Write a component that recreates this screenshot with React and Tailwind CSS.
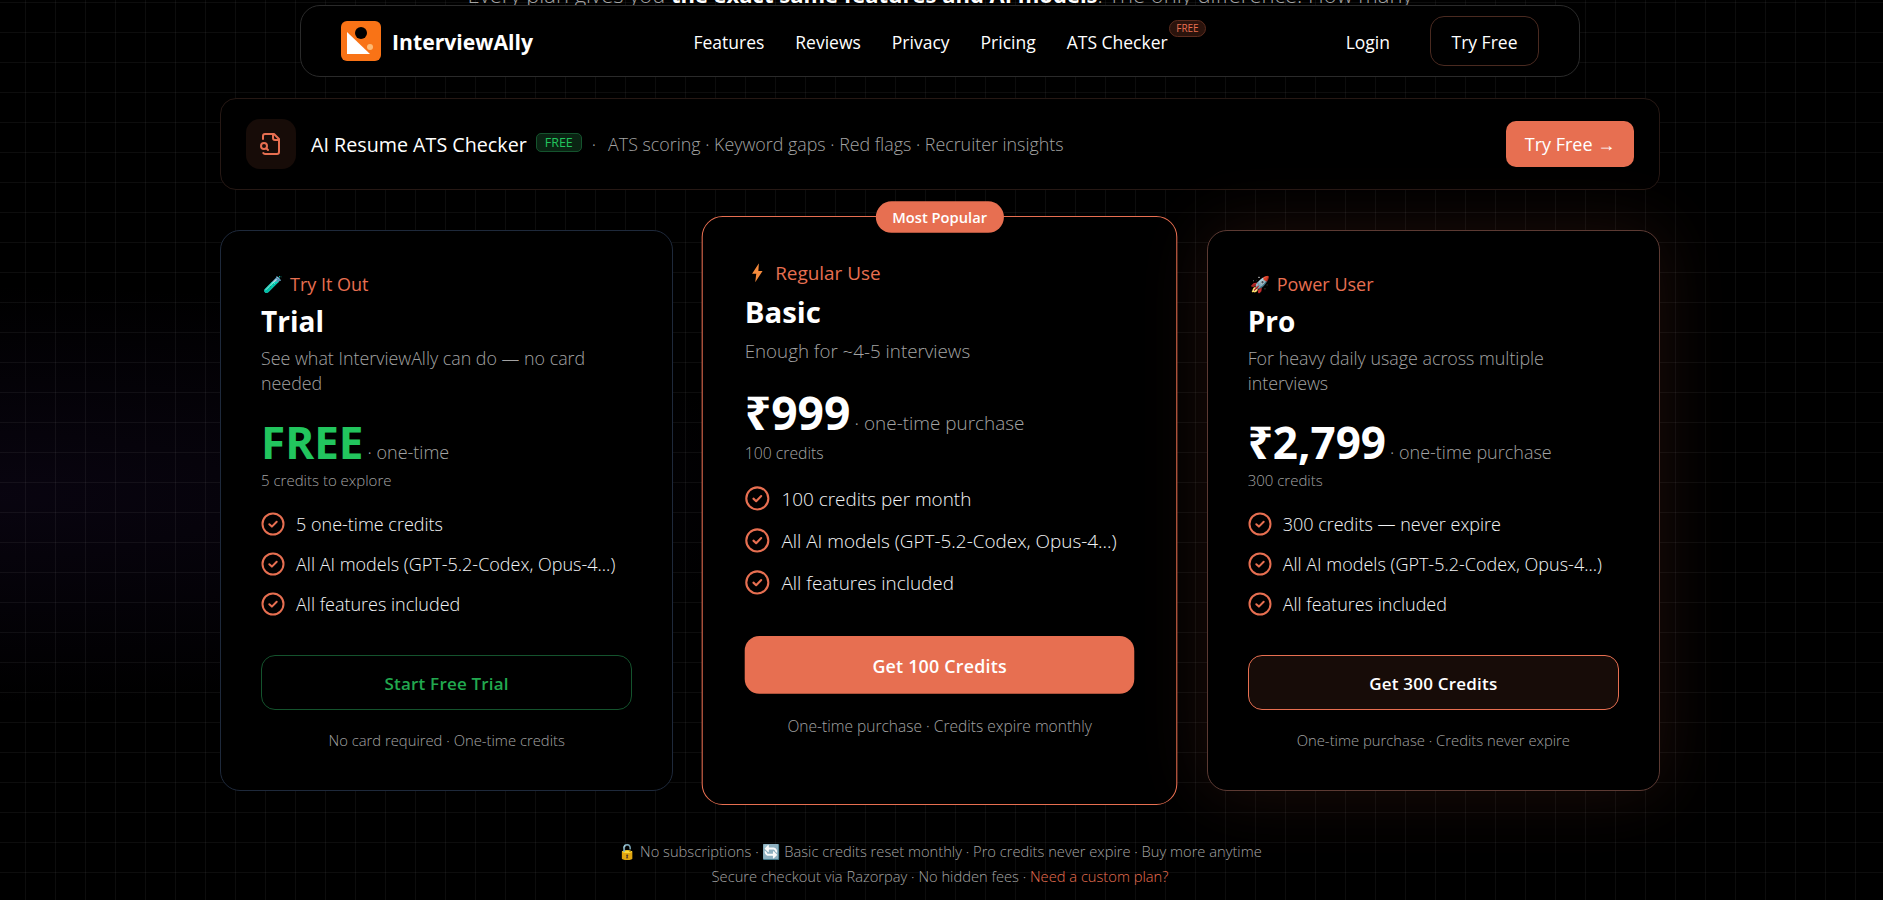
import React from 'react';

const FONT = "font-['Open_Sans','Noto_Sans',sans-serif]";

const PLANS = [
  {
    emoji: '🧪',
    tag: 'Try It Out',
    name: 'Trial',
    desc: 'See what InterviewAlly can do — no card needed',
    price: 'FREE',
    priceColor: 'text-[#22c55e]',
    per: 'one-time',
    credits: '5 credits to explore',
    features: ['5 one-time credits', 'All AI models (GPT-5.2-Codex, Opus-4...)', 'All features included'],
    cta: 'Start Free Trial',
    ctaClass: 'border border-[#14532d] text-[#22a84f]',
    note: 'No card required · One-time credits',
    cardClass: 'border-[#1e293b]',
  },
  {
    bolt: true,
    tag: 'Regular Use',
    name: 'Basic',
    desc: 'Enough for ~4-5 interviews',
    price: '₹999',
    priceColor: 'text-white',
    per: 'one-time purchase',
    credits: '100 credits',
    features: ['100 credits per month', 'All AI models (GPT-5.2-Codex, Opus-4...)', 'All features included'],
    cta: 'Get 100 Credits',
    ctaClass: 'bg-[#e76f51] text-white',
    note: 'One-time purchase · Credits expire monthly',
    cardClass: 'border-[#e76f51] scale-[1.05]',
    popular: true,
  },
  {
    emoji: '🚀',
    tag: 'Power User',
    name: 'Pro',
    desc: 'For heavy daily usage across multiple interviews',
    price: '₹2,799',
    priceColor: 'text-white',
    per: 'one-time purchase',
    credits: '300 credits',
    features: ['300 credits — never expire', 'All AI models (GPT-5.2-Codex, Opus-4...)', 'All features included'],
    cta: 'Get 300 Credits',
    ctaClass: 'border border-[#e76f51] bg-[#170c08] text-white',
    note: 'One-time purchase · Credits never expire',
    cardClass: 'border-[#5c3a33] shadow-[0_0_70px_rgba(231,111,81,0.13)]',
  },
];

function Logo() {
  return (
    <svg width="40" height="40" viewBox="0 0 40 40" className="shrink-0">
      <rect width="40" height="40" rx="6" fill="#f97316" />
      <path d="M6 11 L6 33 L29 33 Z" fill="#fff" />
      <circle cx="20" cy="12" r="6" fill="#000" />
      <circle cx="29" cy="26" r="3" fill="#fdba74" />
    </svg>
  );
}

function Check() {
  return (
    <svg width="24" height="24" viewBox="0 0 24 24" fill="none" stroke="#e76f51" className="shrink-0">
      <circle cx="12" cy="12" r="10.5" strokeWidth="2" />
      <path d="M8.3 12.2 L10.9 14.6 L15.7 9.7" strokeWidth="2" strokeLinecap="round" strokeLinejoin="round" />
    </svg>
  );
}

function Bolt() {
  return (
    <svg width="16" height="18" viewBox="0 0 16 18" className="shrink-0">
      <path d="M9.5 0 L3 10 L7 10 L6 18 L13 7.5 L9 7.5 Z" fill="#f58a3c" />
    </svg>
  );
}

function FileSearchIcon() {
  return (
    <svg width="24" height="24" viewBox="0 0 24 24" fill="none" stroke="#e76f51" strokeWidth="2" strokeLinecap="round" strokeLinejoin="round">
      <path d="M14 2v4a2 2 0 0 0 2 2h4" />
      <path d="M4.268 21a2 2 0 0 0 1.727 1H18a2 2 0 0 0 2-2V7l-5-5H6a2 2 0 0 0-2 2v3" />
      <circle cx="5" cy="14" r="3" />
      <path d="m9 18-1.5-1.5" />
    </svg>
  );
}

function Card({ plan }) {
  return (
    <div className={`relative bg-black border rounded-[20px] h-[561px] px-10 pt-10 ${plan.cardClass}`}>
      {plan.popular && (
        <div className="absolute top-[-15px] left-1/2 -translate-x-1/2 bg-[#e76f51] text-white text-[14px] font-semibold rounded-full px-4 h-[30px] flex items-center whitespace-nowrap">
          Most Popular
        </div>
      )}
      <div className="flex items-center gap-[8px] text-[#e76f51] text-[18px] font-medium leading-[24px] h-[24px] pl-[2px] mt-[1px]">
        {plan.bolt ? <span className="w-[19px] flex justify-center"><Bolt /></span> : <span className="w-[19px] text-[16px]">{plan.emoji}</span>}
        <span>{plan.tag}</span>
      </div>
      <h3 className="text-white text-[28px] font-bold leading-[36px] mt-[7px]">{plan.name}</h3>
      <p className="text-[#a3a3a3] text-[17.85px] font-light leading-[25px] mt-[7px]">{plan.desc}</p>
      <div className="flex items-baseline mt-[18px] whitespace-nowrap">
        <span className={`text-[44px] font-bold leading-[56px] ${plan.priceColor}`}>{plan.price}</span>
        <span className="text-[#a3a3a3] text-[18px] font-light ml-1">· {plan.per}</span>
      </div>
      <p className="text-[#a3a3a3] text-[15px] font-light leading-[20px]">{plan.credits}</p>
      <ul className="mt-[22px] flex flex-col gap-[16px]">
        {plan.features.map((f) => (
          <li key={f} className="flex items-center gap-[11px] text-[#f3f4f6] text-[18px] font-light leading-[24px]">
            <Check />
            <span className="whitespace-nowrap">{f}</span>
          </li>
        ))}
      </ul>
      <button className={`w-full h-[55px] pt-[2px] rounded-[14px] text-[17px] font-semibold tracking-[0.2px] mt-[39px] ${plan.ctaClass}`}>{plan.cta}</button>
      <p className="text-center text-[#a3a3a3] text-[14.8px] font-light leading-[20px] mt-[20px]">{plan.note}</p>
    </div>
  );
}

export default function App() {
  return (
    <div className={`relative h-[900px] overflow-hidden bg-black ${FONT}`}>
      {/* page grid + side glows */}
      <div className="absolute inset-0 bg-[radial-gradient(ellipse_at_0%_55%,rgba(60,30,110,0.14),transparent_30%)]" />
      <div className="absolute inset-0 bg-[linear-gradient(rgba(255,255,255,0.05)_1px,transparent_1px),linear-gradient(90deg,rgba(255,255,255,0.05)_1px,transparent_1px)] bg-[size:30px_30px] bg-[position:25px_2px]" />

      {/* floating nav */}
      <nav className="absolute top-[5px] left-[300px] z-10 w-[1280px] h-[72px] bg-black border border-[#2a2a2a] rounded-[20px] flex items-center px-10">
        <Logo />
        <span className="ml-[11px] mt-[2px] text-white text-[21.2px] font-bold">InterviewAlly</span>
        <div className="flex items-center gap-[31px] ml-auto mt-[2px] text-white text-[17.5px] font-medium">
          <a>Features</a>
          <a>Reviews</a>
          <a>Privacy</a>
          <a>Pricing</a>
          <a className="relative">
            ATS Checker
            <span className="absolute -top-[9px] -right-[38px] border border-[#5c2c1e] bg-[#2a130c] text-[#e76f51] text-[10px] rounded-full px-[6px] leading-[15px]">FREE</span>
          </a>
        </div>
        <a className="ml-[178px] mt-[2px] text-white text-[17.5px] font-medium">Login</a>
        <a className="ml-10 w-[109px] h-[50px] pt-[2px] flex items-center justify-center border border-[#4a2a20] rounded-[14px] text-white text-[17.5px] font-medium">Try Free</a>
      </nav>

      <main className="relative w-[1440px] ml-[220px]">
        <p className="text-center text-[#a3a3a3] text-[22px] font-light leading-[28px] -mt-[20px] whitespace-nowrap">
          Every plan gives you <strong className="text-white font-bold">the exact same features and AI models</strong>. The only difference: How many
        </p>

        {/* ATS banner */}
        <div className="mt-[90px] h-[92px] bg-black border border-[#261814] rounded-[16px] flex items-center px-[25px]">
          <div className="w-[50px] h-[50px] rounded-[14px] bg-[#170c08] flex items-center justify-center">
            <FileSearchIcon />
          </div>
          <span className="ml-[15px] mt-[2px] text-white text-[19.7px] font-medium">AI Resume ATS Checker</span>
          <span className="ml-[9px] -mt-[4px] border border-[#14532d] bg-[#0a2413] text-[#22c55e] text-[12.5px] rounded-[5px] px-2 leading-[17px]">FREE</span>
          <span className="ml-[10px] text-[#a3a3a3] text-[17.85px] font-light">·</span>
          <span className="ml-[12px] text-[#a3a3a3] text-[17.85px] font-light">ATS scoring · Keyword gaps · Red flags · Recruiter insights</span>
          <button className="ml-auto w-[128px] h-[46px] bg-[#e76f51] rounded-[10px] text-white text-[18px] font-medium">Try Free →</button>
        </div>

        {/* plans */}
        <div className="grid grid-cols-3 gap-10 mt-[40px]">
          {PLANS.map((p) => (
            <Card key={p.name} plan={p} />
          ))}
        </div>

        <div className="mt-[48px] text-center text-[#a3a3a3] text-[14.7px] font-light leading-[25px]">
          <p>🔓 No subscriptions · 🔄 Basic credits reset monthly · Pro credits never expire · Buy more anytime</p>
          <p>Secure checkout via Razorpay · No hidden fees · <a className="text-[#e76f51]">Need a custom plan?</a></p>
        </div>
      </main>
    </div>
  );
}
